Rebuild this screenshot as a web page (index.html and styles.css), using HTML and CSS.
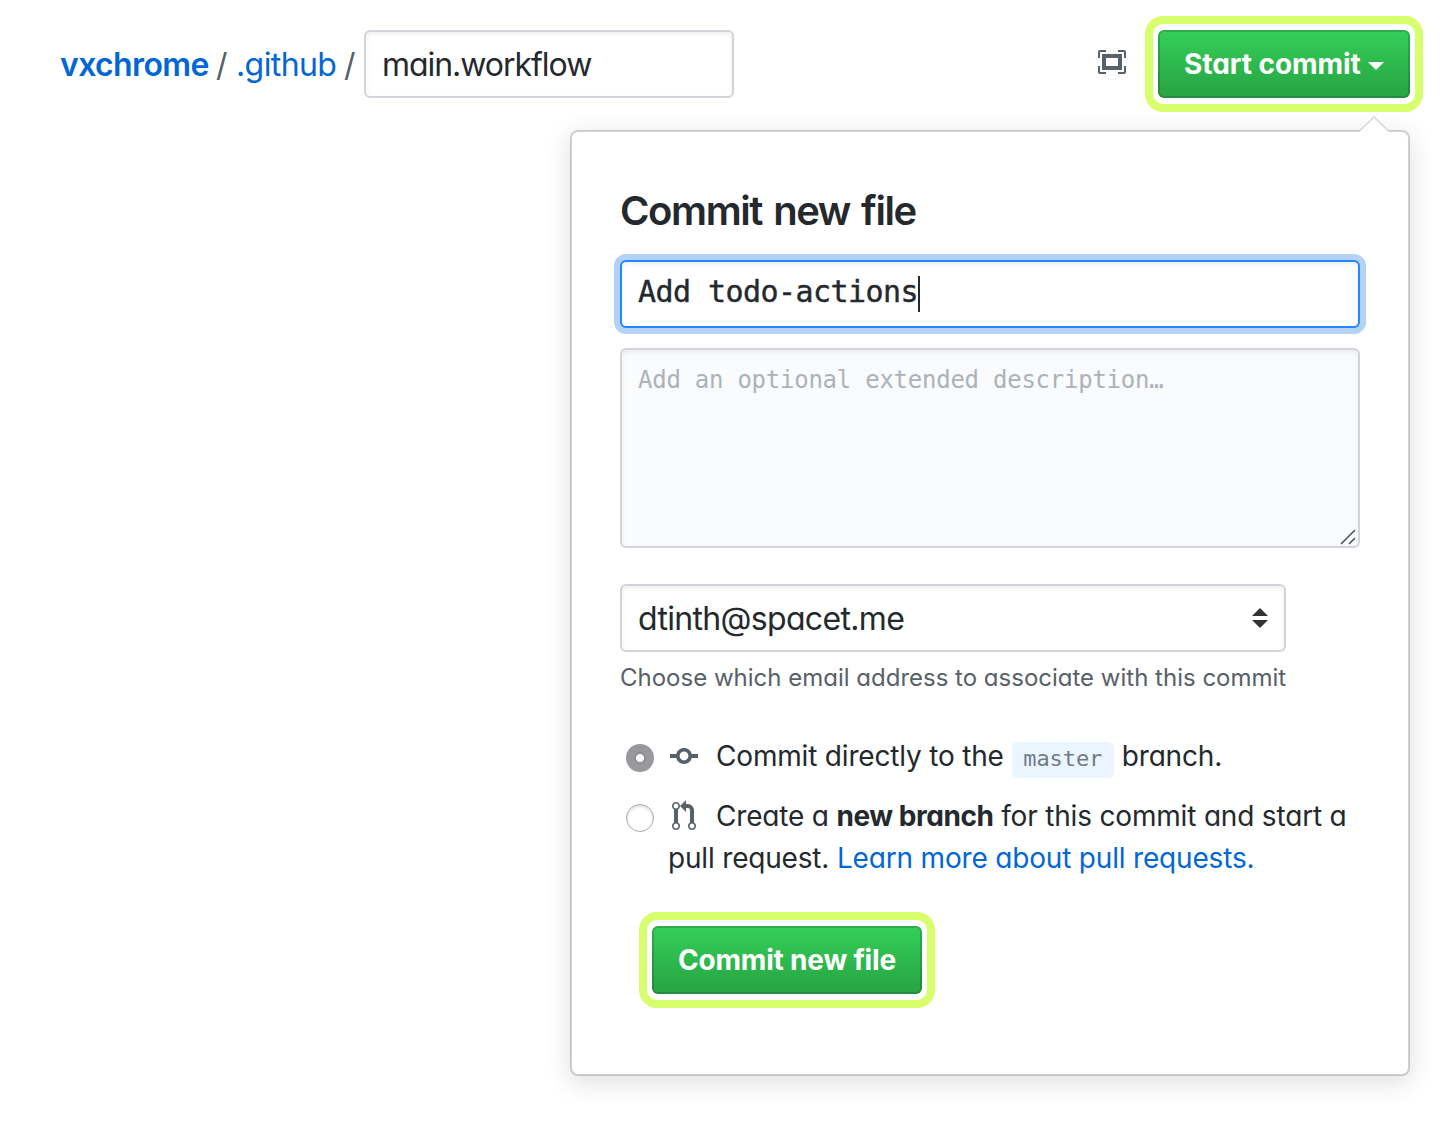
FILE: index.html
```html
<!DOCTYPE html>
<html lang="en">
<head>
<meta charset="utf-8">
<title>Commit new file</title>
<link rel="stylesheet" href="styles.css">
</head>
<body>
<header class="toolbar">
  <nav class="breadcrumb">
    <a class="repo" href="#">vxchrome</a><span class="slash">/</span><a class="folder" href="#">.github</a><span class="slash">/</span>
  </nav>
  <div class="field filename"><span>main.workflow</span></div>
  <svg class="screen-icon" viewBox="0 0 14 12" width="28" height="24" fill="#586069" fill-rule="evenodd"><path d="M0 4V1c0-.55.45-1 1-1h3v1H1v3zM10 0h3c.55 0 1 .45 1 1v3h-1V1h-3zM14 8v3c0 .55-.45 1-1 1h-3v-1h3V8zM4 12H1c-.55 0-1-.45-1-1V8h1v3h3zM2 2h10v8H2zM4 4v4h6V4z"/></svg>
  <button class="btn start"><span>Start commit</span><i class="caret"></i></button>
</header>
<main class="popover">
  <svg class="arrow" viewBox="0 0 32 17" width="32" height="17"><path d="M0 17L16 1l16 16z" fill="#fff"/><path d="M1 15.500L16 1l15 14.500" fill="none" stroke="#d3d4d5" stroke-width="1.300"/></svg>
  <h1><span>Commit new file</span></h1>
  <div class="field summary"><span>Add todo-actions</span><i class="cursor"></i></div>
  <div class="field description"><span>Add an optional extended description…</span>
    <svg class="grip" viewBox="0 0 16 16" width="16" height="16" fill="none" stroke="#4c4c4c" stroke-width="1.500"><path d="M1 15L15 1M9 15l6-6"/></svg>
  </div>
  <div class="field email"><span>dtinth@spacet.me</span>
    <svg viewBox="0 0 16 20" width="16" height="20" fill="#333"><path d="M0 8L8 0l8 8zM0 12h16l-8 8z"/></svg>
  </div>
  <p class="note">Choose which email address to associate with this commit</p>
  <div class="choice">
    <i class="radio checked"></i>
    <p><svg class="icon commit" viewBox="0 0 14 16" width="28" height="32"><path d="M10.860 7c-.45-1.720-2-3-3.860-3-1.860 0-3.410 1.280-3.860 3H0v2h3.140c.45 1.720 2 3 3.860 3 1.860 0 3.410-1.280 3.860-3H14V7h-3.140zM7 10.200c-1.220 0-2.200-.98-2.200-2.200 0-1.220.98-2.200 2.200-2.200 1.220 0 2.200.98 2.200 2.200 0 1.220-.98 2.200-2.200 2.200z"/></svg><span class="direct">Commit directly to the</span><code>master</code><span class="branch">branch.</span></p>
  </div>
  <div class="choice second">
    <i class="radio"></i>
    <p><svg class="icon pull" viewBox="0 0 12 16" width="24" height="32"><path d="M11 11.280V5c-.03-.78-.34-1.470-.94-2.060C9.460 2.350 8.780 2.030 8 2H7V0L4 3l3 3V4h1c.27.02.48.11.69.31.21.2.3.42.31.69v6.280A1.993 1.993 0 0 0 10 15a1.993 1.993 0 0 0 1-3.720zm-1 2.920c-.66 0-1.200-.55-1.200-1.200 0-.65.55-1.200 1.200-1.200.65 0 1.200.55 1.200 1.200 0 .65-.55 1.200-1.200 1.200zM4 3c0-1.110-.89-2-2-2a1.993 1.993 0 0 0-1 3.720v6.560A1.993 1.993 0 0 0 2 15a1.993 1.993 0 0 0 1-3.720V4.720c.59-.34 1-.98 1-1.720zm-.8 10c0 .66-.55 1.200-1.200 1.200-.65 0-1.200-.55-1.200-1.200 0-.65.55-1.200 1.200-1.200.65 0 1.200.55 1.200 1.200zM2 4.200C1.340 4.200.8 3.650.8 3c0-.65.55-1.200 1.200-1.200.65 0 1.200.55 1.200 1.200 0 .65-.55 1.200-1.200 1.200z"/></svg><span class="create">Create a <b>new branch</b> for this commit and start a</span><br><span class="pr">pull request. <a href="#">Learn more about pull requests.</a></span></p>
  </div>
  <button class="btn submit"><span>Commit new file</span></button>
</main>
</body>
</html>
```
FILE: styles.css
```css
* { box-sizing: border-box; }
body {
  margin: 0;
  width: 1440px;
  height: 1136px;
  overflow: hidden;
  background: #fff;
  color: #24292e;
  font: 28px/42px Inter, "Liberation Sans", sans-serif;
  font-feature-settings: "cv11" 1;
  white-space: nowrap;
}
a { color: #0366d6; text-decoration: none; }
p, h1 { margin: 0; }
i { font-style: normal; }
svg { display: block; flex: none; }
.toolbar {
  display: flex;
  align-items: flex-start;
  height: 130px;
  padding: 30px 30px 0 60px;
}
.breadcrumb {
  display: flex;
  width: 304px;
  font-size: 32px;
  line-height: 70px;
}
.repo { width: 156px; font-weight: 600; letter-spacing: -.62px; }
.folder { width: 108px; letter-spacing: -.6px; }
.slash { width: 20px; color: #586069; }
.field {
  display: flex;
  height: 68px;
  padding: 0 16px;
  border: 2px solid #d1d5da;
  border-radius: 6px;
  background: #fff;
  box-shadow: inset 0 2px 4px rgba(27, 31, 35, .075);
  font-size: 32px;
  line-height: 66px;
}
.filename { width: 370px; letter-spacing: -1.04px; }
.screen-icon { margin: 20px 32px 0 auto; }
.btn {
  position: relative;
  display: flex;
  align-items: center;
  height: 68px;
  padding: 0 24px;
  border: 2px solid rgba(27, 31, 35, .2);
  border-radius: 6px;
  background: #28a745 linear-gradient(180deg, #34d058, #28a745 90%) -2px -2px / calc(100% + 4px) calc(100% + 4px);
  color: #fff;
  font: 700 28px/42px Inter, "Liberation Sans", sans-serif;
  font-feature-settings: "cv11" 1;
  letter-spacing: -.2px;
}
.btn::after {
  content: "";
  position: absolute;
  inset: -16px -15px;
  border: 8px solid #d7fe6c;
  border-radius: 18px;
}
.start { width: 252px; letter-spacing: -.05px; }
.caret {
  margin: 4px 0 0 auto;
  border: 8px solid transparent;
  border-top-color: #fff;
  border-bottom: 0;
}
.popover {
  position: relative;
  width: 840px;
  height: 946px;
  margin-left: 570px;
  padding: 54px 48px 0;
  border: 2px solid rgba(27, 31, 35, .2);
  border-radius: 8px;
  background: #fff;
  background-clip: padding-box;
  box-shadow: 0 6px 24px rgba(27, 31, 35, .15);
}
.arrow { position: absolute; top: -16px; right: 18px; }
h1 { height: 74px; font-size: 40px; line-height: 49px; font-weight: 600; letter-spacing: -1.4px; word-spacing: 2.4px; }
.summary {
  align-items: flex-start;
  border-color: #2188ff;
  box-shadow: inset 0 2px 4px rgba(27, 31, 35, .075), 0 0 0 6px #b5d1f5;
  font: 30px/60px "DejaVu Sans Mono", monospace;
  letter-spacing: -.56px;
  -webkit-text-stroke: .4px #24292e;
}
.cursor { width: 2px; height: 36px; margin-top: 14px; background: #24292e; }
.description {
  position: relative;
  height: 200px;
  margin-top: 20px;
  background: #fafbfc;
  color: #adb2b8;
  font: 24px/60px "DejaVu Sans Mono", monospace;
  letter-spacing: -.25px;
}
.grip { position: absolute; right: 2px; bottom: 1px; }
.email {
  align-items: center;
  justify-content: space-between;
  width: 666px;
  margin-top: 36px;
  letter-spacing: -.67px;
}
.email span { padding-top: 2px; }
.note { padding-top: 8px; height: 86px; font-size: 24px; line-height: 36px; color: #586069; }
.choice { display: flex; height: 60px; padding-left: 6px; }
.choice p { margin-top: -3px; letter-spacing: -.18px; }
.second { height: 128px; }
.radio {
  width: 28px;
  height: 28px;
  margin: 6px 14px 0 0;
  flex: none;
  border: 1px solid #aaa;
  border-radius: 50%;
  background: #fff;
  box-shadow: inset 0 2px 3px rgba(0, 0, 0, .12);
}
.checked { border: 0; background: radial-gradient(circle, #fff 3.500px, #8a8b8e 4.500px, #98999c 7px); box-shadow: none; }
.icon { display: inline-block; vertical-align: top; margin-top: 5px; fill: #586069; }
.commit { margin-left: 2px; margin-right: 18px; }
.pull { margin-left: 4px; margin-right: 20px; }
code {
  display: inline-block;
  vertical-align: top;
  width: 102px;
  height: 36px;
  margin: 7px 8px 0;
  border-radius: 6px;
  background: #eaf5ff;
  color: #6f7b84;
  font: 22px/34px "DejaVu Sans Mono", monospace;
  letter-spacing: -.1px;
  text-align: center;
}
b { font-weight: 700; letter-spacing: -.45px; }
.submit { width: 270px; margin-left: 32px; }
```
